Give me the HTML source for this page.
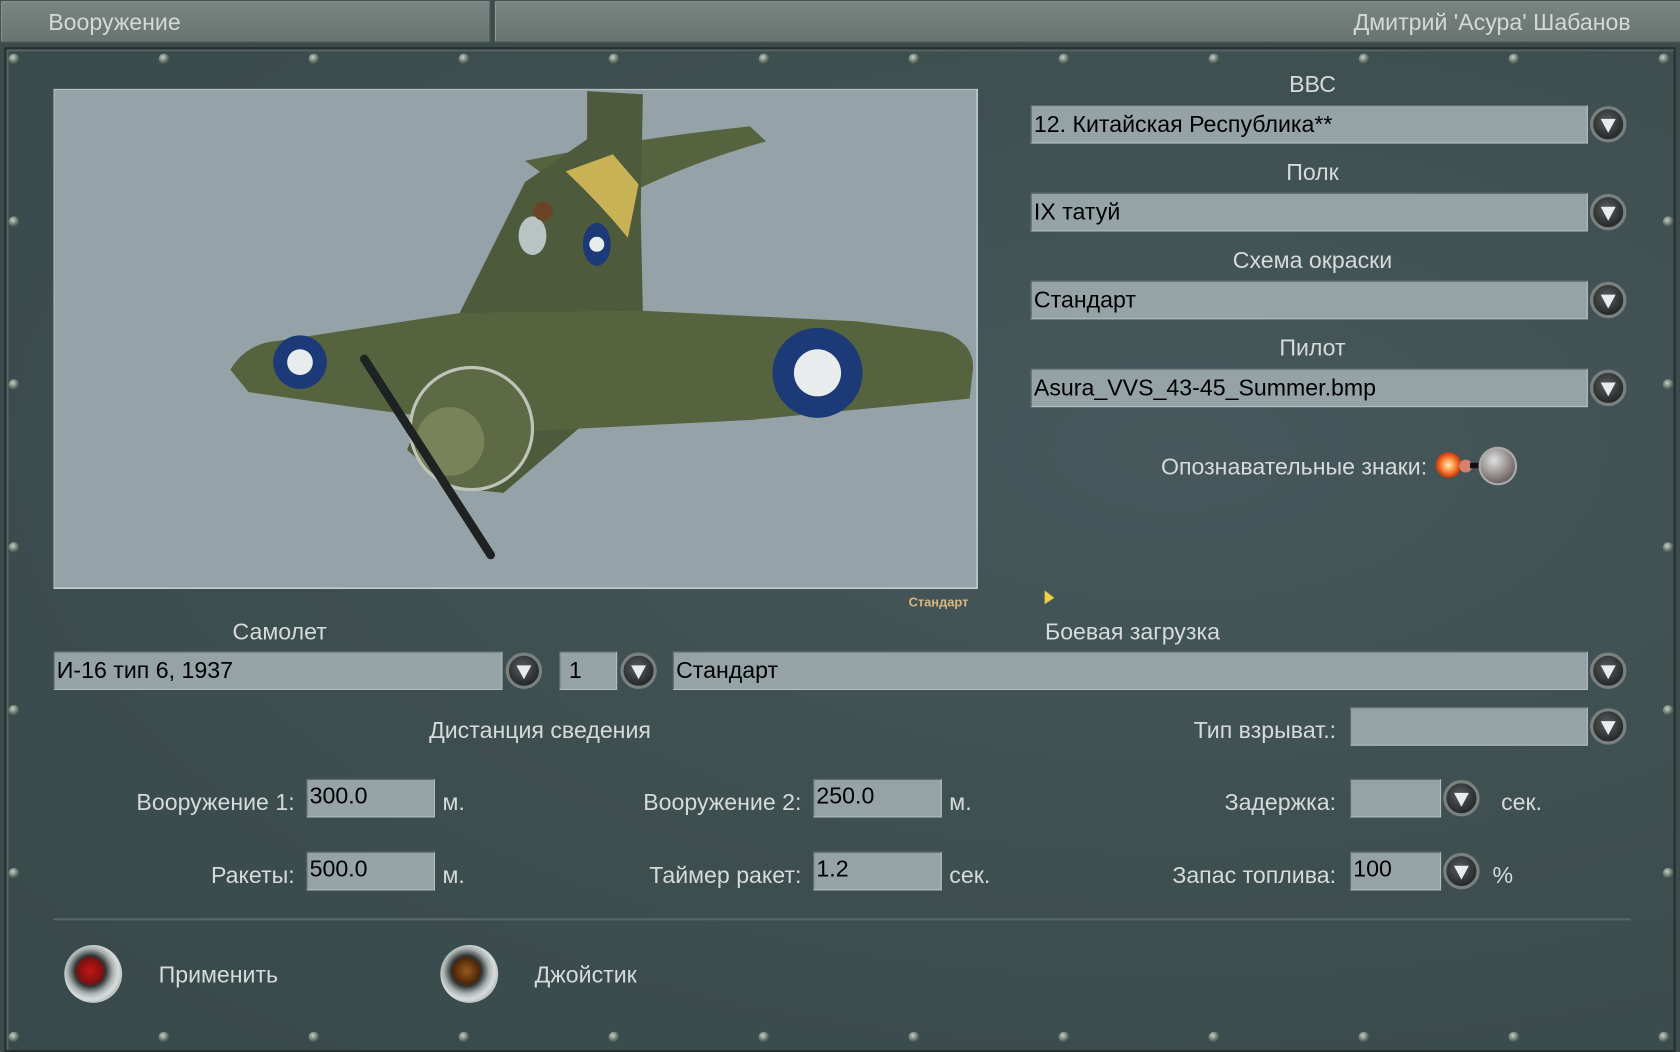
<!DOCTYPE html>
<html><head><meta charset="utf-8"><style>
html,body{margin:0;padding:0;width:1680px;height:1050px;overflow:hidden;background:#3c4c4c}
#s{position:absolute;left:0;top:0;width:1568px;height:980px;transform:scale(1.071429);transform-origin:0 0;font-family:"Liberation Sans",sans-serif;color:#d6dada}
.a{position:absolute}
.hdr{position:absolute;top:0;height:38px;background:linear-gradient(#7a8684,#69736f);border:1px solid #4a5250;border-radius:2px;box-shadow:inset 1px 1px 0 #8e9896}
.panel{position:absolute;left:4px;top:44px;width:1556px;height:934px;background:radial-gradient(ellipse at 70% 40%,#46585b 0%,#3e4f50 50%,#38494b 100%);border:2px solid #26302f;box-shadow:inset 2px 2px 0 #556464}
.scr{position:absolute;width:10px;height:10px;margin:-5px;border-radius:50%;background:radial-gradient(circle at 40% 35%,#c8d0c8,#5a6a60 55%,#1c2420);}
.lbl{position:absolute;font-size:21.6px;white-space:nowrap}
.c{transform:translateX(-50%)}
.r{transform:translateX(-100%)}
.f{position:absolute;height:34px;background:#95a3a7;border:1px solid #5d6b6c;border-right-color:#b2bec0;border-bottom-color:#b2bec0;color:#000;font-size:21.6px;line-height:32px;padding-left:2px;box-sizing:border-box;white-space:nowrap}
.b{position:absolute;width:34px;height:34px;margin:-17px;border-radius:50%;background:radial-gradient(circle at 45% 40%,#5a5e5e,#262a2a 70%);border:3px solid #7a8080;box-sizing:border-box}
.b:after{content:"";position:absolute;left:7px;top:9px;border-left:7px solid transparent;border-right:7px solid transparent;border-top:13px solid #e8ecec}
</style></head><body><div id="s">
<div class="hdr" style="left:0;width:456px"></div>
<div class="hdr" style="left:461px;width:1106px"></div>
<div class="lbl" style="left:45px;top:8px;color:#d4d8d8">Вооружение</div>
<div class="lbl r" style="left:1522px;top:8px;color:#d4d8d8">Дмитрий 'Асура' Шабанов</div>
<div class="panel"></div>
<div id="screws"></div>
<svg class="a" style="left:50px;top:83px" width="863" height="467" viewBox="50 83 863 467">
<rect x="50" y="83" width="862" height="466" fill="#95a3a8" stroke="#c4cccc" stroke-width="1.5"/>
<path d="M490 150 Q600 128 700 118 L715 132 Q650 150 592 178 L520 172Z" fill="#56633f"/>
<path d="M548 85 L600 88 L598 200 L600 290 L540 400 L470 460 L420 455 L380 420 L430 290 L490 170 L548 130Z" fill="#4d5a3c"/>
<path d="M215 345 Q230 320 260 318 L430 292 L600 290 L800 300 L880 310 Q910 320 908 345 L905 372 L700 392 L500 402 L330 380 L232 366Z" fill="#56633f"/>
<path d="M528 160 L572 144 L596 172 L586 222 Q560 190 528 160Z" fill="#c9b256"/>
<circle cx="440" cy="400" r="57" fill="#5e6a45"/>
<circle cx="440" cy="400" r="57" fill="none" stroke="#c0c4b8" stroke-width="3"/>
<circle cx="420" cy="412" r="32" fill="#798258"/>
<line x1="340" y1="335" x2="458" y2="518" stroke="#1e2222" stroke-width="8" stroke-linecap="round"/>
<circle cx="280" cy="338" r="25" fill="#1c3a78"/><circle cx="280" cy="338" r="12" fill="#e8ecec"/>
<circle cx="763" cy="348" r="42" fill="#1c3a78"/><circle cx="763" cy="348" r="22" fill="#e8ecec"/>
<ellipse cx="557" cy="228" rx="13" ry="20" fill="#1c3a78"/><circle cx="557" cy="228" r="7" fill="#e8ecec"/>
<ellipse cx="497" cy="220" rx="13" ry="18" fill="#b8c4c4"/>
<circle cx="507" cy="197" r="9" fill="#6b4428"/>
</svg>
<div class="a" style="left:848px;top:555px;font-size:12px;font-weight:bold;color:#d8b880">Стандарт</div>
<svg class="a" style="left:974px;top:550px" width="12" height="16"><path d="M1 1 L1 14 L10 8Z" fill="#f0d040"/></svg>

<div class="lbl c" style="left:1225px;top:66px">ВВС</div>
<div class="f" style="left:962px;top:98px;width:520px;height:36px;line-height:34px">12. Китайская Республика**</div>
<div class="b" style="left:1501px;top:116px"></div>
<div class="lbl c" style="left:1225px;top:148px">Полк</div>
<div class="f" style="left:962px;top:180px;width:520px;height:36px;line-height:34px">IX татуй</div>
<div class="b" style="left:1501px;top:198px"></div>
<div class="lbl c" style="left:1225px;top:230px">Схема окраски</div>
<div class="f" style="left:962px;top:262px;width:520px;height:36px;line-height:34px">Стандарт</div>
<div class="b" style="left:1501px;top:280px"></div>
<div class="lbl c" style="left:1225px;top:312px">Пилот</div>
<div class="f" style="left:962px;top:344px;width:520px;height:36px;line-height:34px">Asura_VVS_43-45_Summer.bmp</div>
<div class="b" style="left:1501px;top:362px"></div>
<div class="lbl r" style="left:1332px;top:423px">Опознавательные знаки:</div>
<div class="a" style="left:1340px;top:422px;width:24px;height:24px;border-radius:50%;background:radial-gradient(circle,#fff0c0 0%,#ff9040 35%,#d04010 65%,rgba(120,40,20,0) 100%)"></div>
<div class="a" style="left:1362px;top:429px;width:12px;height:12px;border-radius:50%;background:#d88070"></div>
<div class="a" style="left:1372px;top:432px;width:22px;height:5px;background:#111"></div>
<div class="a" style="left:1380px;top:417px;width:36px;height:36px;border-radius:50%;background:radial-gradient(circle at 40% 35%,#e0e0e0,#7a7070 60%,#3a3434);box-shadow:inset 0 0 0 2px #aaa"></div>

<div class="lbl c" style="left:261px;top:577px">Самолет</div>
<div class="lbl c" style="left:1057px;top:577px">Боевая загрузка</div>
<div class="f" style="left:50px;top:608px;width:419px;height:36px;line-height:34px">И-16 тип 6, 1937</div>
<div class="b" style="left:489px;top:626px"></div>
<div class="f" style="left:522px;top:608px;width:54px;height:36px;line-height:34px;padding-left:8px">1</div>
<div class="b" style="left:596px;top:626px"></div>
<div class="f" style="left:628px;top:608px;width:854px;height:36px;line-height:34px">Стандарт</div>
<div class="b" style="left:1501px;top:626px"></div>

<div class="lbl c" style="left:504px;top:669px">Дистанция сведения</div>
<div class="lbl r" style="left:1247px;top:669px">Тип взрыват.:</div>
<div class="f" style="left:1260px;top:660px;width:222px;height:36px"></div>
<div class="b" style="left:1501px;top:678px"></div>

<div class="lbl r" style="left:275px;top:736px">Вооружение 1:</div>
<div class="f" style="left:286px;top:727px;width:120px;height:36px;line-height:30px">300.0</div>
<div class="lbl" style="left:413px;top:736px">м.</div>
<div class="lbl r" style="left:748px;top:736px">Вооружение 2:</div>
<div class="f" style="left:759px;top:727px;width:120px;height:36px;line-height:30px">250.0</div>
<div class="lbl" style="left:886px;top:736px">м.</div>
<div class="lbl r" style="left:1247px;top:736px">Задержка:</div>
<div class="f" style="left:1260px;top:727px;width:85px;height:36px"></div>
<div class="b" style="left:1364px;top:745px"></div>
<div class="lbl" style="left:1401px;top:736px">сек.</div>

<div class="lbl r" style="left:275px;top:804px">Ракеты:</div>
<div class="f" style="left:286px;top:795px;width:120px;height:36px;line-height:30px">500.0</div>
<div class="lbl" style="left:413px;top:804px">м.</div>
<div class="lbl r" style="left:748px;top:804px">Таймер ракет:</div>
<div class="f" style="left:759px;top:795px;width:120px;height:36px;line-height:30px">1.2</div>
<div class="lbl" style="left:886px;top:804px">сек.</div>
<div class="lbl r" style="left:1247px;top:804px">Запас топлива:</div>
<div class="f" style="left:1260px;top:795px;width:85px;height:36px;line-height:30px">100</div>
<div class="b" style="left:1364px;top:813px"></div>
<div class="lbl" style="left:1393px;top:804px">%</div>

<div class="a" style="left:50px;top:857px;width:1472px;height:2px;background:#56666a"></div>
<div class="a" style="left:60px;top:882px;width:54px;height:54px;border-radius:50%;background:radial-gradient(circle at 45% 45%,#c01818 0%,#801010 28%,#303434 34%,#a8b0b0 50%,#d8dcdc 62%,#6a7272 100%)"></div>
<div class="lbl" style="left:148px;top:897px">Применить</div>
<div class="a" style="left:411px;top:882px;width:54px;height:54px;border-radius:50%;background:radial-gradient(circle at 45% 45%,#9a5a20 0%,#502808 28%,#303434 34%,#a8b0b0 50%,#d8dcdc 62%,#6a7272 100%)"></div>
<div class="lbl" style="left:499px;top:897px">Джойстик</div>
</div>
<script>
var h='';for(var x=13;x<1568;x+=140){h+='<div class="scr" style="left:'+x+'px;top:55px"></div><div class="scr" style="left:'+x+'px;top:968px"></div>';}
for(var y=207;y<900;y+=152){h+='<div class="scr" style="left:13px;top:'+y+'px"></div><div class="scr" style="left:1557px;top:'+y+'px"></div>';}
document.getElementById('screws').innerHTML=h;
</script>
</body></html>
